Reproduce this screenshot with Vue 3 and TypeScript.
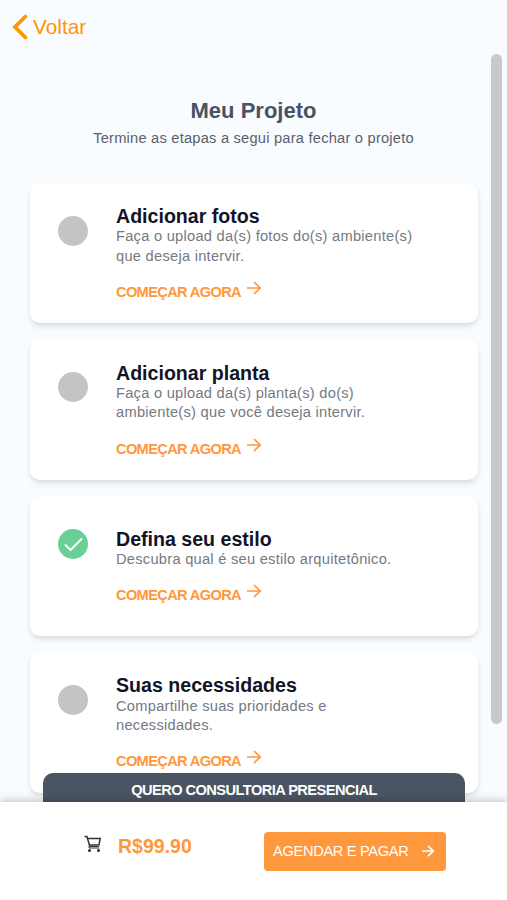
<script setup lang="ts">
interface Step {
  title: string
  lines: string[]
  done: boolean
}

const steps: Step[] = [
  { title: 'Adicionar fotos', lines: ['Faça o upload da(s) fotos do(s) ambiente(s)', 'que deseja intervir.'], done: false },
  { title: 'Adicionar planta', lines: ['Faça o upload da(s) planta(s) do(s)', 'ambiente(s) que você deseja intervir.'], done: false },
  { title: 'Defina seu estilo', lines: ['Descubra qual é seu estilo arquitetônico.'], done: true },
  { title: 'Suas necessidades', lines: ['Compartilhe suas prioridades e', 'necessidades.'], done: false },
]
</script>

<template>
  <div class="screen">
    <header class="top">
      <a class="back">
        <svg class="chevron" width="17" height="28" viewBox="0 0 17 28"><path d="M13.5 3.500 3 14l10.500 10.500" /></svg>
        <span>Voltar</span>
      </a>
    </header>
    <main class="content">
      <div class="scrollbar"></div>
      <h1>Meu Projeto</h1>
      <p class="subtitle">Termine as etapas a segui para fechar o projeto</p>
      <section class="list">
        <article v-for="step in steps" :key="step.title" class="card">
          <div class="status" :class="{ done: step.done }">
            <svg v-if="step.done" width="30" height="30" viewBox="0 0 30 30"><path d="M7 15.500l5.500 5.500L24 9.500" /></svg>
          </div>
          <div class="info">
            <h2>{{ step.title }}</h2>
            <p v-for="line in step.lines" :key="line" class="line">{{ line }}</p>
            <a class="start">
              <span>COMEÇAR AGORA</span>
              <svg width="16" height="16" viewBox="0 0 16 16"><path d="M1 8h13M8 2 14.200 8l-6.200 6" /></svg>
            </a>
          </div>
        </article>
      </section>
      <button class="consult">QUERO CONSULTORIA PRESENCIAL</button>
    </main>
    <footer class="checkout">
      <svg class="cart" width="18" height="18" viewBox="0 0 18 18">
        <path d="M.5 1.500h2.400l2.500 8.500h9.600L16.200 3.500H3.500" />
        <path class="base" d="M5.400 10l-.4 3h10.500M5.300 11.500h9.500" />
        <circle cx="5.500" cy="15.500" r=".8" /><circle cx="14.500" cy="15.500" r=".8" />
      </svg>
      <span class="price">R$99.90</span>
      <button class="pay">
        <span>AGENDAR E PAGAR</span>
        <svg width="14" height="14" viewBox="0 0 14 14"><path d="M1 7h11.500M7 1.800 12.300 7 7 12.200" /></svg>
      </button>
    </footer>
  </div>
</template>

<style>
body {
  margin: 0;
  background: #f8fcff;
}
</style>

<style scoped>
.screen {
  display: flex;
  flex-direction: column;
  height: 900px;
  overflow: hidden;
  background: #f8fcff;
  font-family: "Liberation Sans", Arial, sans-serif;
}
h1, h2, p { margin: 0; }
svg { fill: none; stroke: currentColor; flex: none; }
button { border: 0; font-family: inherit; }
.top { height: 54px; flex: none; }
.back {
  display: flex;
  align-items: center;
  gap: 4px;
  padding: 13px 0 0 12px;
  color: #ff9500;
  font-size: 20.800px;
  line-height: 28px;
}
.chevron { stroke-width: 3.8; stroke-linecap: round; }
.content {
  position: relative;
  height: 748px;
  flex: none;
  overflow: hidden;
}
.scrollbar {
  position: absolute;
  top: 0;
  right: 5px;
  width: 11px;
  height: 670px;
  border-radius: 6px;
  background: #c9c9c9;
}
h1 {
  padding-top: 43px;
  text-align: center;
  font-size: 22px;
  line-height: 27px;
  color: #4a5261;
}
.subtitle {
  margin-top: 3.500px;
  text-align: center;
  font-size: 14.660px;
  line-height: 20px;
  letter-spacing: .22px;
  color: #5b616b;
}
.list {
  display: flex;
  flex-direction: column;
  gap: 16px;
  padding: 35.500px 29.500px 0 30px;
}
.card {
  display: flex;
  align-items: center;
  box-sizing: border-box;
  height: 140.400px;
  padding-left: 28px;
  border-radius: 10px;
  background: #fff;
  box-shadow: 0 4px 7px -1px rgba(0, 0, 0, .11), 0 2px 5px -1px rgba(0, 0, 0, .05);
}
.status {
  align-self: flex-start;
  box-sizing: border-box;
  width: 30px;
  height: 30px;
  margin-top: 33px;
  border-radius: 50%;
  background: #c4c4c4;
}
.status.done { background: #68cf96; color: #fff; }
.status svg { display: block; stroke-width: 2; }
.info { margin-left: 28px; white-space: nowrap; }
h2 {
  margin-bottom: -.7px;
  font-size: 19.600px;
  line-height: 24px;
  color: #101426;
}
.line {
  font-size: 14.660px;
  line-height: 19.550px;
  letter-spacing: .26px;
  color: #757982;
}
.start {
  display: flex;
  align-items: center;
  gap: 5px;
  height: 20px;
  margin-top: 15.700px;
  color: #ff983c;
  font-size: 14.660px;
  font-weight: 700;
  letter-spacing: -.680px;
}
.start svg { margin-bottom: 8px; stroke-width: 1.700; }
.consult {
  position: absolute;
  left: 43px;
  top: 719px;
  width: 422px;
  height: 34px;
  padding: 0 0 1px;
  border-radius: 10px 10px 0 0;
  background: #4a5463;
  color: #fff;
  font-size: 14.660px;
  font-weight: 700;
  letter-spacing: -.580px;
}
.checkout {
  position: relative;
  display: flex;
  align-items: center;
  flex: 1;
  padding: 0 61px 0 84px;
  background: #fff;
  box-shadow: 0 0 9px rgba(0, 0, 0, .3);
}
.cart { margin-bottom: 14px; color: #30343b; stroke-width: 1.500; }
.base { stroke-width: 1; }
.price {
  margin: 0 0 10px 16px;
  color: #ff983c;
  font-size: 19.550px;
  font-weight: 700;
}
.pay {
  display: flex;
  align-items: center;
  justify-content: space-between;
  width: 182px;
  height: 39px;
  margin-left: auto;
  padding: 0 11px 0 9px;
  border-radius: 4px;
  background: #ff983c;
  color: #fff;
  font-size: 14.660px;
  letter-spacing: -.340px;
}
.pay svg { stroke-width: 1.700; }
</style>
